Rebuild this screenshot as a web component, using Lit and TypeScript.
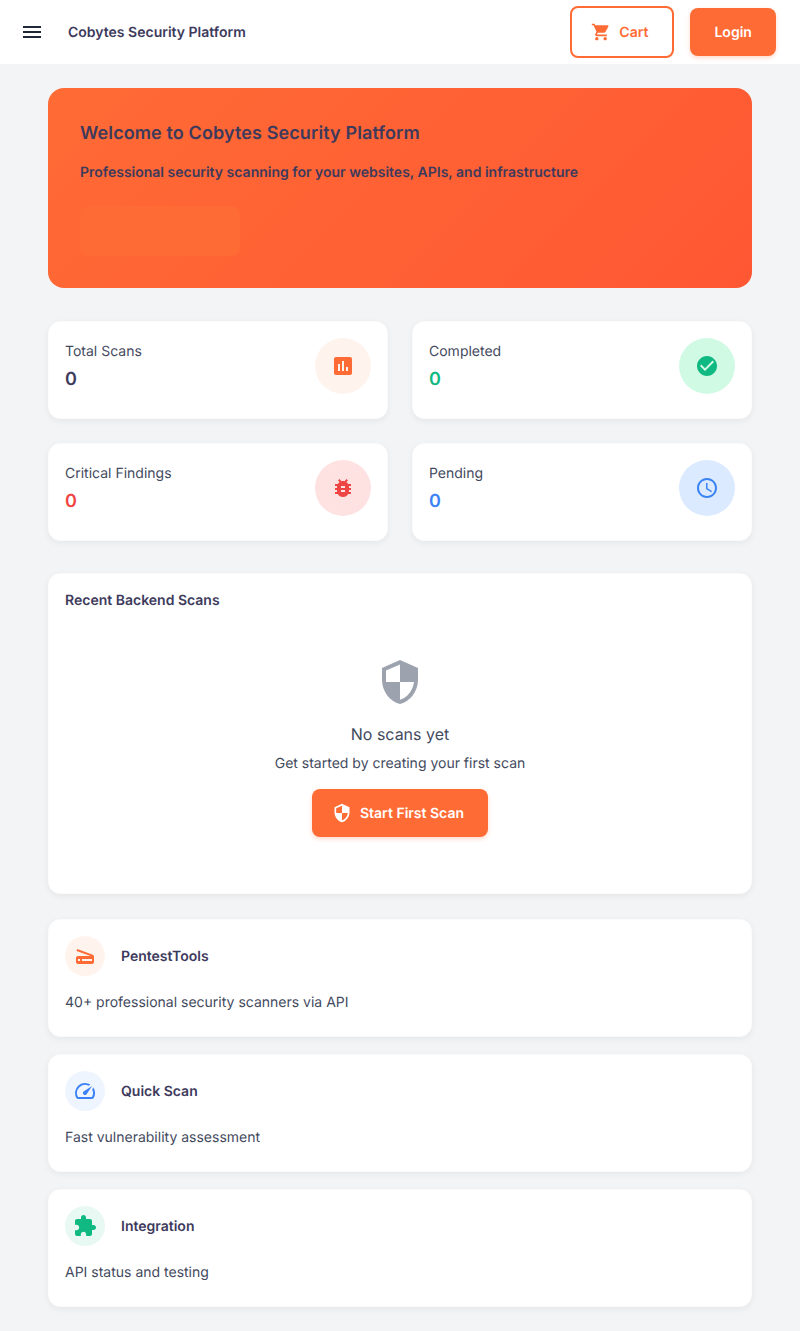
import { LitElement, html, css, svg } from "lit";
import { customElement } from "lit/decorators.js";

const P = {
  menu: "M3 18h18v-2H3v2zm0-5h18v-2H3v2zm0-7v2h18V6H3z",
  cart: "M7 18c-1.1 0-1.99.9-1.99 2S5.9 22 7 22s2-.9 2-2-.9-2-2-2zM1 2v2h2l3.6 7.59-1.35 2.45c-.16.28-.25.61-.25.96 0 1.1.9 2 2 2h12v-2H7.42c-.14 0-.25-.11-.25-.25l.03-.12.9-1.63h7.45c.75 0 1.41-.41 1.75-1.03l3.58-6.49c.08-.14.12-.31.12-.48 0-.55-.45-1-1-1H5.21l-.94-2H1zm16 16c-1.1 0-1.99.9-1.99 2s.89 2 1.99 2 2-.9 2-2-.9-2-2-2z",
  assessment: "M19 3H5c-1.1 0-2 .9-2 2v14c0 1.1.9 2 2 2h14c1.1 0 2-.9 2-2V5c0-1.1-.9-2-2-2zM9 17H7v-7h2v7zm4 0h-2V7h2v10zm4 0h-2v-4h2v4z",
  check: "M12 2C6.48 2 2 6.48 2 12s4.48 10 10 10 10-4.48 10-10S17.52 2 12 2zm-2 15l-5-5 1.41-1.41L10 14.17l7.59-7.59L19 8l-9 9z",
  bug: "M20 8h-2.81c-.45-.78-1.07-1.45-1.82-1.96L17 4.41 15.59 3l-2.17 2.17C12.96 5.06 12.49 5 12 5c-.49 0-.96.06-1.41.17L8.41 3 7 4.41l1.62 1.63C7.88 6.55 7.26 7.22 6.81 8H4v2h2.09c-.05.33-.09.66-.09 1v1H4v2h2v1c0 .34.04.67.09 1H4v2h2.81c1.04 1.79 2.97 3 5.19 3s4.15-1.21 5.19-3H20v-2h-2.09c.05-.33.09-.66.09-1v-1h2v-2h-2v-1c0-.34-.04-.67-.09-1H20V8zm-6 8h-4v-2h4v2zm0-4h-4v-2h4v2z",
  clock: "M11.99 2C6.47 2 2 6.48 2 12s4.47 10 9.99 10C17.52 22 22 17.52 22 12S17.52 2 11.99 2zM12 20c-4.42 0-8-3.58-8-8s3.58-8 8-8 8 3.58 8 8-3.58 8-8 8zm.5-13H11v6l5.25 3.15.75-1.23-4.5-2.67z",
  shield: "M12 1L3 5v6c0 5.55 3.84 10.74 9 12 5.16-1.26 9-6.45 9-12V5l-9-4zm0 10.99h7c-.53 4.12-3.28 7.79-7 8.94V12H5V6.3l7-3.11v8.8z",
  scanner: "M19.8 10.7L4.2 5l-.7 1.9L17.6 12H5c-1.1 0-2 .9-2 2v4c0 1.1.9 2 2 2h14c1.1 0 2-.9 2-2v-5.5c0-.8-.5-1.6-1.2-1.8zM7 17H5v-2h2v2zm12 0H9v-2h10v2z",
  speed: "M20.38 8.57l-1.23 1.85a8 8 0 0 1-.22 7.58H5.07A8 8 0 0 1 15.58 6.85l1.85-1.23A10 10 0 0 0 3.35 19a2 2 0 0 0 1.72 1h13.85a2 2 0 0 0 1.74-1 10 10 0 0 0-.27-10.44zm-9.79 6.84a2 2 0 0 0 2.83 0l5.66-8.49-8.49 5.66a2 2 0 0 0 0 2.83z",
  extension: "M20.5 11H19V7c0-1.1-.9-2-2-2h-4V3.5C13 2.12 11.88 1 10.5 1S8 2.12 8 3.5V5H4c-1.1 0-1.99.9-1.99 2v3.8H3.5c1.49 0 2.7 1.21 2.7 2.7s-1.21 2.7-2.7 2.7H2V20c0 1.1.9 2 2 2h3.8v-1.5c0-1.49 1.21-2.7 2.7-2.7 1.49 0 2.7 1.21 2.7 2.7V22H17c1.1 0 2-.9 2-2v-4h1.5c1.38 0 2.5-1.12 2.5-2.5S21.88 11 20.5 11z",
};

const icon = (d: string, size = 24) => html`<svg width=${size} height=${size} viewBox="0 0 24 24" fill="currentColor">${svg`<path d=${d}></path>`}</svg>`;

@customElement("app-root")
export class AppRoot extends LitElement {
  static styles = css`
    :host { display: block; min-height: 1331px; background: #f3f4f6; font-family: Inter, "Liberation Sans", sans-serif; color: #3d3a5c; text-rendering: geometricPrecision; }
    * { box-sizing: border-box; }
    svg { display: block; flex: none; }
    header { height: 64px; background: #fff; display: flex; align-items: center; padding: 0 24px 0 20px; }
    .menu { color: #1f2937; margin-right: 24px; }
    .brand { font-size: 14px; line-height: 20px; font-weight: 600; flex: 1; padding-top: 2px; }
    .btn { display: flex; align-items: center; justify-content: center; font-size: 14px; font-weight: 600; border-radius: 8px; }
    .btn svg { margin-left: -4px; }
    .cart { width: 104.8px; height: 52px; border: 2px solid #ff6b35; color: #ff6b35; background: #fff; gap: 8px; margin-right: 16px; }
    .primary { background: #ff6b35; color: #fff; box-shadow: 0 2px 4px rgba(255,107,53,.25); }
    .login { width: 85.7px; height: 48px; }
    main { padding: 24px 48px; display: flex; flex-direction: column; }
    .hero { height: 200px; border-radius: 16px; background: linear-gradient(135deg, #ff6b35, #ff5733); padding: 33px 32px 32px; margin-bottom: 33px; }
    .hero h1 { margin: 0 0 16px; font-size: 18px; line-height: 26px; font-weight: 600; letter-spacing: .11px; }
    .hero p { margin: 0 0 23px; font-size: 14px; line-height: 20px; font-weight: 600; }
    .ghost { width: 160px; height: 50px; border-radius: 8px; background: #ff6b35; }
    .card { background: #fff; border: 1px solid #fbfbfc; border-radius: 12px; box-shadow: 0 2px 6px rgba(0,0,0,.06); }
    .stats { display: grid; grid-template-columns: 340px 340px; gap: 24px; margin-bottom: 32px; }
    .stat { height: 98px; padding: 16px; display: flex; justify-content: space-between; }
    .label { font-size: 14px; line-height: 20px; color: #434a5e; margin-top: 4px; }
    .value { font-size: 18px; line-height: 26px; font-weight: 600; margin-top: 5px; }
    .circle { border-radius: 50%; display: flex; align-items: center; justify-content: center; flex: none; }
    .big { width: 56px; height: 56px; }
    .small { width: 40px; height: 40px; }
    .orange { color: #ff6b35; }
    .green { color: #10b981; }
    .red { color: #ef4444; }
    .blue { color: #3b82f6; }
    .bg-orange { background: #fff3ee; }
    .bg-green { background: #d1fae5; }
    .bg-red { background: #fee2e2; }
    .bg-blue { background: #dbeafe; }
    .bg-lblue { background: #eff5ff; }
    .bg-lgreen { background: #e8f8f2; }
    .recent { height: 321px; padding: 16px; margin-bottom: 25px; }
    .recent h2 { margin: 1px 0 0; font-size: 14px; line-height: 20px; font-weight: 600; }
    .empty { display: flex; flex-direction: column; align-items: center; padding-top: 47px; }
    .shield { color: #9ca3af; }
    .empty h3 { margin: 16px 0 0; font-size: 16px; line-height: 24px; font-weight: 400; color: #434a5e; }
    .empty p { margin: 8px 0 0; font-size: 14px; line-height: 20px; color: #434a5e; }
    .start { width: 176px; height: 48px; gap: 8px; margin-top: 15px; }
    .features { display: flex; flex-direction: column; gap: 17px; }
    .feature { height: 118px; padding: 16px; }
    .f-head { display: flex; align-items: center; gap: 16px; }
    .f-title { font-size: 14px; line-height: 20px; font-weight: 600; padding-top: 2px; }
    .f-text { margin: 17px 0 0; font-size: 14px; line-height: 20px; color: #434a5e; }
  `;

  private stat(label: string, color: string, d: string) {
    return html`<div class="card stat">
      <div><div class="label">${label}</div><div class="value ${color === "orange" ? "" : color}">0</div></div>
      <div class="circle big bg-${color} ${color}">${icon(d)}</div>
    </div>`;
  }

  private feature(title: string, text: string, color: string, bg: string, d: string) {
    return html`<div class="card feature">
      <div class="f-head">
        <div class="circle small ${bg} ${color}">${icon(d)}</div>
        <div class="f-title">${title}</div>
      </div>
      <p class="f-text">${text}</p>
    </div>`;
  }

  render() {
    return html`
      <header>
        <div class="menu">${icon(P.menu)}</div>
        <div class="brand">Cobytes Security Platform</div>
        <div class="btn cart">${icon(P.cart, 20)}<span>Cart</span></div>
        <div class="btn primary login">Login</div>
      </header>
      <main>
        <section class="hero">
          <h1>Welcome to Cobytes Security Platform</h1>
          <p>Professional security scanning for your websites, APIs, and infrastructure</p>
          <div class="ghost"></div>
        </section>
        <section class="stats">
          ${this.stat("Total Scans", "orange", P.assessment)}
          ${this.stat("Completed", "green", P.check)}
          ${this.stat("Critical Findings", "red", P.bug)}
          ${this.stat("Pending", "blue", P.clock)}
        </section>
        <section class="card recent">
          <h2>Recent Backend Scans</h2>
          <div class="empty">
            <div class="shield">${icon(P.shield, 48)}</div>
            <h3>No scans yet</h3>
            <p>Get started by creating your first scan</p>
            <div class="btn primary start">${icon(P.shield, 20)}<span>Start First Scan</span></div>
          </div>
        </section>
        <section class="features">
          ${this.feature("PentestTools", "40+ professional security scanners via API", "orange", "bg-orange", P.scanner)}
          ${this.feature("Quick Scan", "Fast vulnerability assessment", "blue", "bg-lblue", P.speed)}
          ${this.feature("Integration", "API status and testing", "green", "bg-lgreen", P.extension)}
        </section>
      </main>
    `;
  }
}
